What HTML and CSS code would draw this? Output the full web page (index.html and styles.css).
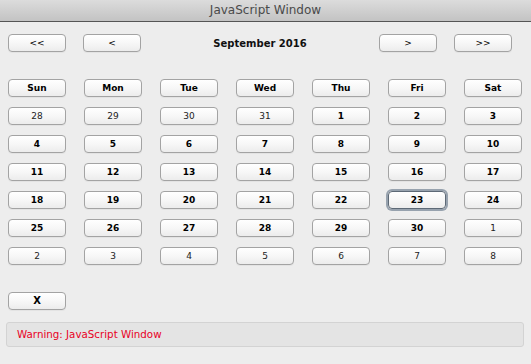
FILE: index.html
```html
<!DOCTYPE html>
<html>
<head>
<meta charset="utf-8">
<link rel="stylesheet" href="styles.css">
</head>
<body>
<div class="titlebar">JavaScript Window</div>
<div class="content">
  <div class="nav">
    <button class="btn nav-btn">&lt;&lt;</button>
    <button class="btn nav-btn">&lt;</button>
    <div class="month">September 2016</div>
    <button class="btn nav-btn">&gt;</button>
    <button class="btn nav-btn">&gt;&gt;</button>
  </div>
  <div class="grid">
    <button class="btn head">Sun</button>
    <button class="btn head">Mon</button>
    <button class="btn head">Tue</button>
    <button class="btn head">Wed</button>
    <button class="btn head">Thu</button>
    <button class="btn head">Fri</button>
    <button class="btn head">Sat</button>

    <button class="btn other">28</button>
    <button class="btn other">29</button>
    <button class="btn other">30</button>
    <button class="btn other">31</button>
    <button class="btn day">1</button>
    <button class="btn day">2</button>
    <button class="btn day">3</button>

    <button class="btn day">4</button>
    <button class="btn day">5</button>
    <button class="btn day">6</button>
    <button class="btn day">7</button>
    <button class="btn day">8</button>
    <button class="btn day">9</button>
    <button class="btn day">10</button>

    <button class="btn day">11</button>
    <button class="btn day">12</button>
    <button class="btn day">13</button>
    <button class="btn day">14</button>
    <button class="btn day">15</button>
    <button class="btn day">16</button>
    <button class="btn day">17</button>

    <button class="btn day">18</button>
    <button class="btn day">19</button>
    <button class="btn day">20</button>
    <button class="btn day">21</button>
    <button class="btn day">22</button>
    <button class="btn day focus">23</button>
    <button class="btn day">24</button>

    <button class="btn day">25</button>
    <button class="btn day">26</button>
    <button class="btn day">27</button>
    <button class="btn day">28</button>
    <button class="btn day">29</button>
    <button class="btn day">30</button>
    <button class="btn other">1</button>

    <button class="btn other">2</button>
    <button class="btn other">3</button>
    <button class="btn other">4</button>
    <button class="btn other">5</button>
    <button class="btn other">6</button>
    <button class="btn other">7</button>
    <button class="btn other">8</button>
  </div>
  <div class="close-row">
    <button class="btn close">X</button>
  </div>
</div>
<div class="warning">Warning: JavaScript Window</div>
</body>
</html>
```
FILE: styles.css
```css
html, body {
  margin: 0;
  padding: 0;
}
body {
  background: #ededed;
  width: 531px;
  height: 364px;
  overflow: hidden;
  font-family: "DejaVu Sans", sans-serif;
}
.titlebar {
  height: 21px;
  line-height: 21px;
  text-align: center;
  font-size: 12px;
  color: #4a4a4a;
  background: linear-gradient(#dcdcdc, #c3c3c3);
  border-bottom: 1px solid #555;
}
.content {
  padding: 12px 0 0 8px;
}
.btn {
  display: block;
  box-sizing: border-box;
  width: 58px;
  height: 18px;
  margin: 0;
  padding: 0;
  border: 1px solid #a3a3a3;
  border-radius: 4px;
  background: linear-gradient(#ffffff 0%, #f7f7f7 50%, #ececec 100%);
  box-shadow: 0 1px 0 rgba(0,0,0,0.04);
  font-family: "DejaVu Sans", sans-serif;
  font-size: 9px;
  color: #000;
  line-height: 16px;
  text-align: center;
}
.nav {
  display: flex;
  align-items: center;
  height: 18px;
}
.nav-btn {
  font-size: 9px;
  font-weight: normal;
}
.nav-btn + .nav-btn {
  margin-left: 17px;
}
.month {
  width: 238px;
  text-align: center;
  font-weight: bold;
  font-size: 10px;
  color: #111;
}
.grid {
  margin-top: 27px;
  display: grid;
  grid-template-columns: repeat(7, 58px);
  column-gap: 18px;
  row-gap: 10px;
}
.head, .day {
  font-weight: bold;
}
.other {
  font-weight: normal;
  color: #222;
}
.focus {
  border-color: #5d6976;
  box-shadow: 0 0 0 2px #97a2ae;
}
.close-row {
  margin-top: 27px;
}
.close {
  font-weight: bold;
  font-size: 10px;
}
.warning {
  margin: 12px 7px 0 6px;
  height: 25px;
  box-sizing: border-box;
  border: 1px solid #d3d3d3;
  border-radius: 3px;
  background: #e4e4e4;
  color: #e8001f;
  font-size: 10.3px;
  line-height: 23px;
  padding-left: 10px;
}
```
